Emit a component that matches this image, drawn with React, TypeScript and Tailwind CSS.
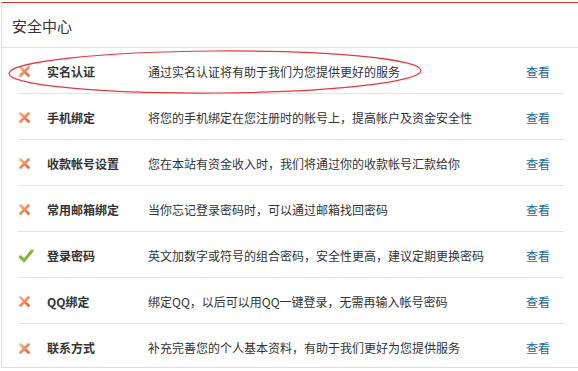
import React from "react";

type Item = { title: string; desc: string; ok?: boolean };

const items: Item[] = [
  { title: "实名认证", desc: "通过实名认证将有助于我们为您提供更好的服务" },
  { title: "手机绑定", desc: "将您的手机绑定在您注册时的帐号上，提高帐户及资金安全性" },
  { title: "收款帐号设置", desc: "您在本站有资金收入时，我们将通过你的收款帐号汇款给你" },
  { title: "常用邮箱绑定", desc: "当你忘记登录密码时，可以通过邮箱找回密码" },
  { title: "登录密码", desc: "英文加数字或符号的组合密码，安全性更高，建议定期更换密码", ok: true },
  { title: "QQ绑定", desc: "绑定QQ，以后可以用QQ一键登录，无需再输入帐号密码" },
  { title: "联系方式", desc: "补充完善您的个人基本资料，有助于我们更好为您提供服务" },
];

const CrossIcon = () => (
  <svg width="13" height="13" viewBox="0 0 13 13">
    <defs>
      <linearGradient id="xg" x1="0" y1="0" x2="1" y2="1">
        <stop offset="0" stopColor="#f9b08c" />
        <stop offset="1" stopColor="#e46a38" />
      </linearGradient>
    </defs>
    <path d="M2.5 2.5 L10.5 10.5 M10.5 2.5 L2.5 10.5" stroke="url(#xg)" strokeWidth="2.8" strokeLinecap="round" />
  </svg>
);

const CheckIcon = () => (
  <svg width="16" height="14" viewBox="0 0 16 14">
    <path d="M2.5 8 L6 11.5 L14 2" fill="none" stroke="#8ab744" strokeWidth="3.2" strokeLinecap="round" strokeLinejoin="round" />
  </svg>
);

export default function App() {
  return (
    <div
      className="w-[578px] h-[371px] bg-white pt-[2px] pl-[1px]"
      style={{ fontFamily: '"Microsoft YaHei", "Noto Sans CJK SC", sans-serif' }}
    >
      <div className="relative h-[366px] border-t border-t-[#d9302f] border-l border-b border-l-[#dddddd] border-b-[#dddddd] text-[#333]">
        <div className="h-[45px] flex items-center pl-[10px] pt-[2px] text-[15px] border-b border-[#e3e3e3]">
          安全中心
        </div>
        <ul className="ml-[16px] mr-[14px]">
          {items.map((it, i) => (
            <li
              key={it.title}
              className={`h-[46px] flex items-center pt-[2px] text-[12px] ${
                i < items.length - 1 ? "border-b border-[#e3e3e3]" : ""
              }`}
            >
              <span className="w-[29px] flex items-center">
                {it.ok ? <CheckIcon /> : <CrossIcon />}
              </span>
              <span className="w-[101px] font-bold">{it.title}</span>
              <span className="flex-1">{it.desc}</span>
              <a className="w-[38px] text-[#21689c] cursor-pointer">查看</a>
            </li>
          ))}
        </ul>
        <svg className="absolute left-0 top-0 pointer-events-none" width="430" height="100">
          <ellipse
            cx="213"
            cy="69"
            rx="206"
            ry="21"
            fill="none"
            stroke="#e8383d"
            strokeWidth="1.2"
            transform="rotate(-0.4 213 69)"
          />
        </svg>
      </div>
    </div>
  );
}
